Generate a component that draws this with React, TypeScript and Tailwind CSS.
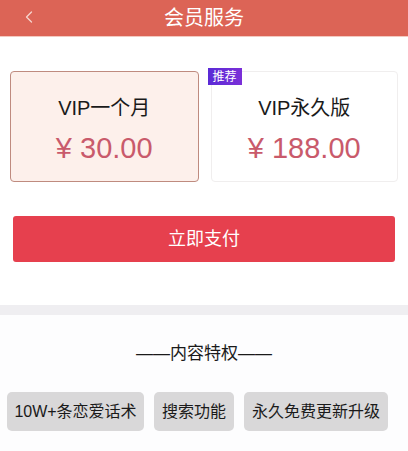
import { ChevronLeft } from "lucide-react";

const font = {
  fontFamily: '"Liberation Sans", "Noto Sans CJK SC", sans-serif',
};

export default function App() {
  return (
    <div className="w-[408px] h-[451px] bg-white overflow-hidden" style={font}>
      {/* Header */}
      <header className="relative h-[37px] bg-[#dc6456] flex items-center justify-center border-b border-[#f3c9c0]">
        <ChevronLeft className="absolute left-[19px] top-[7px] h-[20px] w-[20px] text-[#f6d6cf]" strokeWidth={1.5} />
        <h1 className="text-white text-[20px] leading-none">会员服务</h1>
      </header>

      {/* Plans */}
      <div className="flex gap-3 px-[10px] pt-[34px]">
        <div className="w-[189px] h-[111px] rounded-[4px] border border-[#bf8b7f] bg-[#fdf0eb] flex flex-col items-center">
          <div className="mt-[26px] text-[20px] leading-none text-[#1a1a1a]">VIP一个月</div>
          <div className="mt-[16px] text-[29px] leading-none text-[#c95a6b]">¥ 30.00</div>
        </div>
        <div className="relative w-[188px] h-[111px] rounded-[4px] border border-[#f0eeee] bg-white flex flex-col items-center">
          <span className="absolute -left-[4px] -top-[4px] w-[34px] h-[17px] flex items-center justify-center text-[12px] text-white bg-gradient-to-r from-[#5a2ad6] to-[#7b2fd8]">
            推荐
          </span>
          <div className="mt-[26px] text-[20px] leading-none text-[#1a1a1a]">VIP永久版</div>
          <div className="mt-[16px] text-[29px] leading-none text-[#c95a6b]">¥ 188.00</div>
        </div>
      </div>

      {/* Pay button */}
      <div className="px-[13px] pt-[34px]">
        <button className="w-full h-[46px] rounded-[3px] bg-[#e6404e] text-white text-[18px]">
          立即支付
        </button>
      </div>

      {/* Divider */}
      <div className="mt-[43px] h-[10px] bg-[#efeef1]" />

      {/* Privileges */}
      <div className="bg-[#fdfdfe] h-[136px] pt-[30px]">
        <div className="text-center text-[17px] leading-none text-[#1a1a1a]">——内容特权——</div>
        <div className="flex gap-[10px] px-[7px] pt-[30px]">
          <span className="h-[39px] w-[137px] justify-center rounded-[5px] bg-[#d9d8d9] flex items-center text-[16px] text-[#1a1a1a]">10W+条恋爱话术</span>
          <span className="h-[39px] w-[80px] justify-center rounded-[5px] bg-[#d9d8d9] flex items-center text-[16px] text-[#1a1a1a]">搜索功能</span>
          <span className="h-[39px] w-[144px] justify-center rounded-[5px] bg-[#d9d8d9] flex items-center text-[16px] text-[#1a1a1a]">永久免费更新升级</span>
        </div>
      </div>
    </div>
  );
}
